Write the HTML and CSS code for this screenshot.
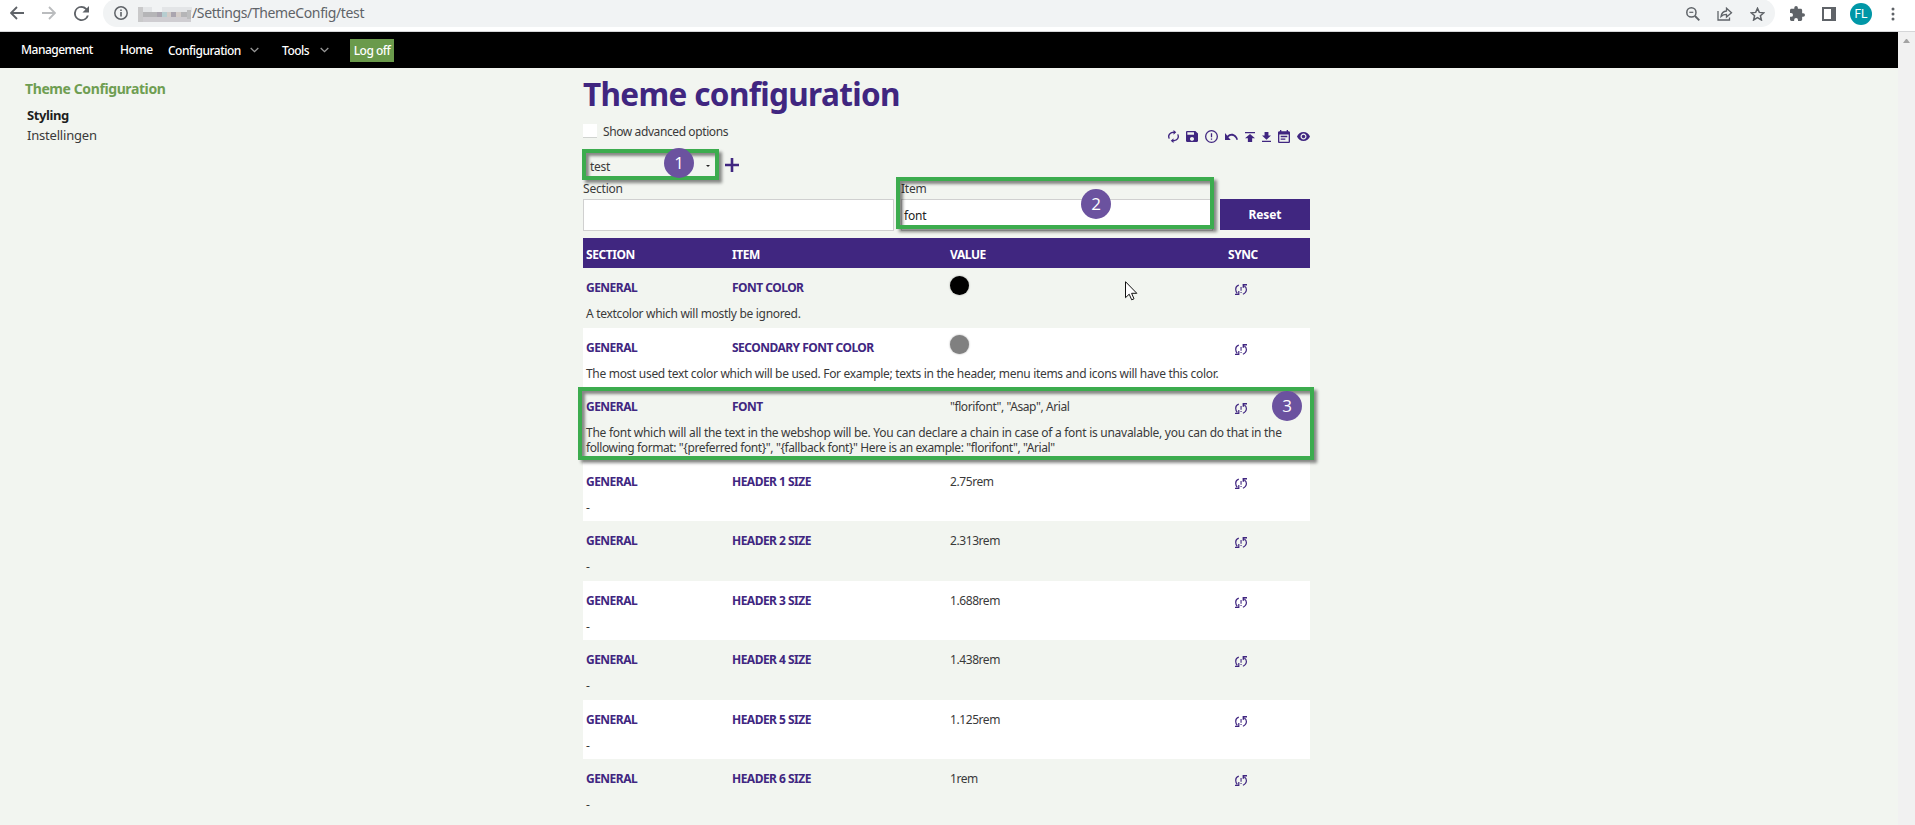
FILE: index.html
```html
<!DOCTYPE html>
<html lang="en">
<head>
<meta charset="utf-8">
<title>Theme configuration</title>
<link rel="stylesheet" href="styles.css">
</head>
<body>
<svg class="defs" width="0" height="0">
  <symbol id="sync" viewBox="0 0 12 11"><path d="M3.800 1.100C1.700 1.800.7 3.200.7 5.200c0 1.800.6 3 1.600 4.200M0 10.300h3.800V7" fill="none" stroke="#402680" stroke-width="1.200"/><path d="M5.500 3h1.100v3.700H5.500zM5.500 7.900h1.100v1.200H5.500z"/><path d="M7.600 0H12v1.500H9.200v2.300H7.600z"/><path d="M9.400 2c1.400.9 2 2 2 3.600 0 2.200-1.200 3.700-3.500 4.700" fill="none" stroke="#402680" stroke-width="1.200"/></symbol>
</svg>

<header class="browser">
  <svg class="b-icon back" width="14" height="14" viewBox="0 0 14 14"><path d="M14 7H1.500M7 1 1 7l6 6"/></svg>
  <svg class="b-icon forward" width="14" height="14" viewBox="0 0 14 14"><path d="M0 7h12.500M7 1l6 6-6 6"/></svg>
  <svg class="reload" width="15" height="15" viewBox="4 4 16 16"><path d="M17.650 6.350A7.960 7.960 0 0 0 12 4a8 8 0 1 0 7.730 10h-2.080A6 6 0 1 1 12 6c1.660 0 3.140.69 4.220 1.780L13 11h7V4l-2.350 2.350z"/></svg>
  <div class="address">
    <svg width="14" height="14" viewBox="0 0 14 14"><circle cx="7" cy="7" r="6.200" fill="none" stroke="#5f6368" stroke-width="1.500"/><path d="M6.200 6h1.600v4.500H6.200zM6.200 3.400h1.600V5H6.200z" fill="#5f6368"/></svg>
    <svg class="mosaic" width="54" height="15" viewBox="0 0 54 15"><path fill="#c9c9ca" d="M0 0h5v15H0z"/><path fill="#e3e5e7" d="M5 0h9v5H5zM24 0h30v5H24z"/><path fill="#b5b5b7" d="M5 5h9v5H5zM14 5h5v5h-5zM43 5h6v5h-6z"/><path fill="#cfcdd1" d="M5 10h14v5H5zM19 10h34v5H19z"/><path fill="#aaa5af" d="M19 5h5v5h-5zM33 5h5v5h-5z"/><path fill="#b6cdd0" d="M24 5h5v5h-5z"/><path fill="#d3ccc8" d="M29 5h4v5h-4zM38 5h5v5h-5z"/><path fill="#bdbebf" d="M49 3h4v9h-4z"/></svg>
    <span class="url">/Settings/ThemeConfig/test</span>
  </div>
  <div class="tools">
    <svg class="t-zoom" width="14" height="14" viewBox="0 0 14 14"><path d="M9 9 13.300 13.300" stroke-width="1.900"/><path d="M3.300 5.300h4" stroke-width="1.200"/><circle cx="5.400" cy="5.400" r="4.600" stroke-width="1.500"/></svg>
    <svg class="t-share" width="16" height="14" viewBox="0 0 16 14"><path d="M1 4v9h11.500v-2.500M4 9.500C4.500 6 6.500 4.300 9.500 4V1.200L14.500 5.800 9.500 10V7.400C7 7.400 5.500 8 4 9.500z" stroke-width="1.300"/></svg>
    <svg class="t-star" width="15" height="14" viewBox="0 0 15 14"><path d="M7.500 1.300 9.300 5.400l4.500.4-3.400 2.900 1 4.300-3.900-2.300L3.600 13l1-4.300L1.200 5.800l4.500-.4z" stroke-width="1.500"/></svg>
    <svg class="t-ext" width="15" height="15" viewBox="2 1 21 21"><path fill="#5f6368" stroke="none" d="M20.500 11H19V7c0-1.100-.9-2-2-2h-4V3.500a2.500 2.500 0 0 0-5 0V5H4c-1.100 0-2 .9-2 2v3.800h1.500a2.700 2.700 0 0 1 0 5.400H2V20c0 1.100.9 2 2 2h3.800v-1.500a2.700 2.700 0 0 1 5.400 0V22H17c1.100 0 2-.9 2-2v-4h1.500a2.500 2.500 0 0 0 0-5z"/></svg>
    <svg class="t-panel" width="14" height="14" viewBox="0 0 14 14"><path fill="#5f6368" stroke="none" fill-rule="evenodd" d="M0 0h14v14H0zM2 2v10h7V2z"/></svg>
    <span class="avatar">FL</span>
    <svg class="t-menu" width="4" height="14" viewBox="0 0 4 14"><g fill="#5f6368" stroke="none"><circle cx="2" cy="2" r="1.500"/><circle cx="2" cy="7" r="1.500"/><circle cx="2" cy="12" r="1.500"/></g></svg>
  </div>
</header>

<div class="viewport">
  <div class="page">
    <nav class="nav">
      <span class="brand">Management</span>
      <span class="home">Home</span>
      <span class="drop conf">Configuration<svg width="9" height="6" viewBox="0 0 9 6"><path d="M.7 1 4.500 4.700 8.300 1"/></svg></span>
      <span class="drop tool">Tools<svg width="9" height="6" viewBox="0 0 9 6"><path d="M.7 1 4.500 4.700 8.300 1"/></svg></span>
      <span class="logoff">Log off</span>
    </nav>
    <div class="body">
      <aside class="side">
        <h2 class="side-title">Theme Configuration</h2>
        <div class="side-link active">Styling</div>
        <div class="side-link">Instellingen</div>
      </aside>
      <main class="main">
        <h1 class="title">Theme configuration</h1>
        <div class="options">
          <label class="advanced"><span class="check"></span>Show advanced options</label>
          <div class="actions">
            <svg width="11" height="13" viewBox="4 1 16 22" preserveAspectRatio="none"><path d="M12 6v3l4-4-4-4v3c-4.420 0-8 3.580-8 8 0 1.570.46 3.030 1.240 4.260L6.700 14.800c-.45-.83-.7-1.790-.7-2.800 0-3.310 2.690-6 6-6zm6.760 1.740L17.300 9.200c.44.84.7 1.790.7 2.800 0 3.310-2.690 6-6 6v-3l-4 4 4 4v-3c4.420 0 8-3.580 8-8 0-1.570-.46-3.030-1.240-4.260z"/></svg>
            <svg width="12" height="11" viewBox="3 3 18 18" preserveAspectRatio="none"><path d="M17 3H5c-1.110 0-2 .9-2 2v14c0 1.100.89 2 2 2h14c1.100 0 2-.9 2-2V7l-4-4zm-5 16c-1.660 0-3-1.340-3-3s1.340-3 3-3 3 1.340 3 3-1.340 3-3 3zm3-10H5V5h10v4z"/></svg>
            <svg width="13" height="13" viewBox="2 2 20 20"><path d="M11 15h2v2h-2zm0-8h2v6h-2zM12 2a10 10 0 1 0 0 20 10 10 0 0 0 0-20zm0 18a8 8 0 1 1 0-16 8 8 0 0 1 0 16z"/></svg>
            <svg width="13" height="7" viewBox="2 7 20.500 9" preserveAspectRatio="none"><path d="M12.500 8c-2.650 0-5.050.99-6.900 2.600L2 7v9h9l-3.620-3.620c1.390-1.160 3.160-1.880 5.120-1.880 3.540 0 6.550 2.310 7.600 5.500l2.370-.78C21.080 11.030 17.150 8 12.500 8z"/></svg>
            <svg width="10" height="10" viewBox="5 4 14 16" preserveAspectRatio="none"><path d="M5 4v2h14V4H5zm0 10h4v6h6v-6h4l-7-7-7 7z"/></svg>
            <svg width="9" height="10" viewBox="5 3 14 17" preserveAspectRatio="none"><path d="M19 9h-4V3H9v6H5l7 7 7-7zM5 18v2h14v-2H5z"/></svg>
            <svg width="12" height="13" viewBox="3 1 18 20" preserveAspectRatio="none"><path d="M17 10H7v2h10v-2zm2-7h-1V1h-2v2H8V1H6v2H5c-1.110 0-1.990.9-1.990 2L3 19c0 1.100.89 2 2 2h14c1.100 0 2-.9 2-2V5c0-1.100-.9-2-2-2zm0 16H5V8h14v11zm-5-5H7v2h7v-2z"/></svg>
            <svg width="13" height="9" viewBox="1 4.500 22 15" preserveAspectRatio="none"><path d="M12 4.500C7 4.500 2.730 7.610 1 12c1.730 4.390 6 7.500 11 7.500s9.270-3.110 11-7.500c-1.730-4.390-6-7.500-11-7.500zM12 17c-2.760 0-5-2.240-5-5s2.240-5 5-5 5 2.240 5 5-2.240 5-5 5zm0-8c-1.660 0-3 1.340-3 3s1.340 3 3 3 3-1.340 3-3-1.340-3-3-3z"/></svg>
          </div>
        </div>
        <div class="theme-row">
          <div class="select"><span>test</span><i class="caret"></i></div>
          <svg class="plus" width="14" height="14" viewBox="0 0 14 14"><path d="M5.700 0h2.600v5.700H14v2.600H8.300V14H5.700V8.300H0V5.700h5.700z"/></svg>
        </div>
        <div class="filters">
          <label class="field f-section">Section<span class="input"></span></label>
          <label class="field f-item">Item<span class="input">font</span></label>
          <span class="reset">Reset</span>
        </div>
        <div class="table">
          <div class="cells thead"><span>SECTION</span><span>ITEM</span><span>VALUE</span><span>SYNC</span></div>
          <div class="row"><div class="cells"><b>GENERAL</b><b>FONT COLOR</b><span><i class="dot black"></i></span><svg class="sync"><use href="#sync"/></svg></div><p>A textcolor which will mostly be ignored.</p></div>
          <div class="row"><div class="cells"><b>GENERAL</b><b>SECONDARY FONT COLOR</b><span><i class="dot gray"></i></span><svg class="sync"><use href="#sync"/></svg></div><p>The most used text color which will be used. For example; texts in the header, menu items and icons will have this color.</p></div>
          <div class="row tall"><div class="cells"><b>GENERAL</b><b>FONT</b><span>"florifont", "Asap", Arial</span><svg class="sync"><use href="#sync"/></svg></div><p><span class="wide">The font which will all the text in the webshop will be. You can declare a chain in case of a font is unavalable, you can do that in the</span><br><span class="narrow">following format: "{preferred font}", "{fallback font}" Here is an example: "florifont", "Arial"</span></p></div>
          <div class="row"><div class="cells"><b>GENERAL</b><b>HEADER 1 SIZE</b><span>2.75rem</span><svg class="sync"><use href="#sync"/></svg></div><p>-</p></div>
          <div class="row"><div class="cells"><b>GENERAL</b><b>HEADER 2 SIZE</b><span>2.313rem</span><svg class="sync"><use href="#sync"/></svg></div><p>-</p></div>
          <div class="row"><div class="cells"><b>GENERAL</b><b>HEADER 3 SIZE</b><span>1.688rem</span><svg class="sync"><use href="#sync"/></svg></div><p>-</p></div>
          <div class="row"><div class="cells"><b>GENERAL</b><b>HEADER 4 SIZE</b><span>1.438rem</span><svg class="sync"><use href="#sync"/></svg></div><p>-</p></div>
          <div class="row"><div class="cells"><b>GENERAL</b><b>HEADER 5 SIZE</b><span>1.125rem</span><svg class="sync"><use href="#sync"/></svg></div><p>-</p></div>
          <div class="row"><div class="cells"><b>GENERAL</b><b>HEADER 6 SIZE</b><span>1rem</span><svg class="sync"><use href="#sync"/></svg></div><p>-</p></div>
        </div>
      </main>
    </div>
  </div>
  <div class="scrollbar"><i></i></div>
</div>

<div class="mark mark-1"></div><div class="mark mark-2"></div><div class="mark mark-3"></div>
<span class="badge badge-1">1</span><span class="badge badge-2">2</span><span class="badge badge-3">3</span>
<svg class="cursor" width="13" height="20" viewBox="0 0 13 20"><path d="M.5.7v16l3.700-3.500 2.500 5.600 2.300-1L6.600 12.300h5.200z" fill="#fff" stroke="#111" stroke-width="1"/></svg>
</body>
</html>
```
FILE: styles.css
```css
* { box-sizing: border-box; }
body {
  margin: 0;
  height: 825px;
  overflow: hidden;
  position: relative;
  font: 12px/15px "Noto Sans", "Open Sans", sans-serif;
  letter-spacing: -.31px;
  color: #3a3a3a;
  background: #f2f5f0;
}
.defs { position: absolute; }
svg { display: block; flex: none; }

/* browser toolbar */
.browser {
  height: 32px;
  background: #fff;
  border-bottom: 1px solid #d5d6d8;
  display: flex;
  align-items: flex-start;
  padding-left: 10px;
}
.b-icon { fill: none; stroke: #5f6368; stroke-width: 1.8; margin-top: 6px; }
.forward { stroke: #babcbe; margin-left: 18px; }
.reload { fill: #5f6368; margin: 6px 0 0 18px; }
.address {
  width: 1672px;
  height: 28px;
  margin: -1px 0 0 14px;
  padding: 0 0 0 11px;
  border-radius: 14px;
  background: #f1f3f4;
  display: flex;
  align-items: center;
}
.mosaic { margin: 2px 0 0 10px; }
.url { font-size: 14px; line-height: 20px; color: #5f6368; white-space: nowrap; letter-spacing: -.38px; }
.tools {
  display: flex;
  align-items: center;
  height: 27px;
  margin-left: -89px;
  fill: none;
  stroke: #5f6368;
}
.t-share { margin-left: 17px; }
.t-star { margin-left: 17px; }
.t-ext { margin-left: 25px; }
.t-panel { margin-left: 17px; }
.avatar {
  width: 22px;
  height: 22px;
  margin-left: 14px;
  border-radius: 50%;
  background: #0097a7;
  color: #fff;
  font: 12px/22px Roboto, sans-serif;
  letter-spacing: 0;
  text-align: center;
}
.t-menu { margin-left: 19px; }

/* page frame */
.viewport { display: flex; height: 793px; }
.page { width: 1898px; }
.scrollbar { width: 17px; background: #f1f1f1; padding: 7px 5px; }
.scrollbar i { display: block; border: 3.5px solid transparent; border-top: 0; border-bottom: 4px solid #a3a3a3; }

.nav {
  height: 36px;
  background: #000;
  color: #fff;
  display: flex;
  padding-left: 21px;
  font-weight: 500;
  line-height: 36px;
  letter-spacing: -.5px;
  white-space: nowrap;
}
.brand { width: 99px; }
.home { width: 48px; }
.drop { display: flex; padding-top: 1px; }
.drop svg { fill: none; stroke: #9a9a9a; stroke-width: 1.3; margin: 14px 0 0 auto; }
.conf { width: 91px; margin-right: 23px; }
.tool { width: 47px; margin-right: 21px; }
.logoff { width: 44px; height: 23px; margin-top: 7px; background: #6a9a4b; line-height: 24px; text-align: center; }

.body { display: flex; }
.side { width: 583px; padding: 11px 0 0 25px; }
.side-title { margin: 0; font-size: 14px; line-height: 20px; color: #6f9e52; letter-spacing: -.4px; }
.side-link { padding-left: 2px; font-size: 13px; line-height: 20px; letter-spacing: -.2px; }
.side-link.active { font-weight: 700; color: #1e1e1e; margin-top: 6px; letter-spacing: -.4px; }

.main { width: 727px; padding-top: 7px; }
.title { margin: 0; font-size: 31.5px; line-height: 38px; height: 40px; letter-spacing: -.65px; color: #402680; white-space: nowrap; }
.options { display: flex; justify-content: space-between; height: 32px; padding-top: 8px; }
.advanced { display: flex; height: 15px; line-height: 17px; letter-spacing: -.4px; }
.check { width: 14px; height: 14px; margin: 1px 6px 0 0; background: #fff; border-bottom: 1px solid #d0d3d0; }
.actions { display: flex; align-items: center; gap: 7px; height: 13px; margin-top: 7px; fill: #402680; }
.theme-row { display: flex; align-items: center; height: 34px; }
.select { width: 133px; display: flex; align-items: center; justify-content: space-between; padding: 4px 6px 0 7px; }
.caret { border: 2px solid transparent; border-bottom: 0; border-top-color: #222; }
.plus { margin: 1px 0 0 9px; fill: #402680; }
.filters { display: flex; align-items: flex-end; height: 50px; }
.field { display: flex; flex-direction: column; letter-spacing: -.2px; }
.field .input {
  height: 32px;
  margin-top: 3px;
  border: 1px solid #d0d0d0;
  background: #fff;
  color: #222;
  font-size: 12px;
  line-height: 31px;
  padding-left: 2px;
}
.f-section { width: 311px; margin-right: 7px; }
.f-item { width: 312px; }
.reset {
  width: 90px;
  height: 31px;
  margin: 0 0 1px 7px;
  background: #402680;
  color: #fff;
  font-weight: 700;
  line-height: 32px;
  letter-spacing: -.1px;
  text-align: center;
}

.table { margin-top: 7px; }
.cells { display: grid; grid-template-columns: 146px 218px 278px 79px; padding-left: 3px; letter-spacing: -.42px; }
.thead { height: 30px; line-height: 33px; background: #402680; color: #fff; font-weight: 700; }
.row { height: 59px; }
.row:nth-child(2), .row:nth-child(6), .row:nth-child(8) { height: 60px; }
.row.tall { height: 75px; }
.row:nth-child(odd) { background: #fff; }
.row .cells { height: 38px; line-height: 40px; }
.row b { color: #402680; letter-spacing: -.52px; }
.row p { margin: 0; padding-left: 3px; white-space: nowrap; }
.row .wide { letter-spacing: -.27px; }
.row .narrow { letter-spacing: -.4px; }
.sync { width: 12px; height: 11px; margin: 16px 0 0 7px; fill: #402680; }
.dot { display: block; width: 19px; height: 19px; margin-top: 7px; border-radius: 50%; box-shadow: 0 0 2px rgba(0, 0, 0, .4); }
.black { background: #000; margin-top: 8px; }
.gray { background: #808080; }

/* annotations over the page */
.mark {
  position: absolute;
  border: 4px solid #3cac4e;
  box-shadow: 3px 3px 3px rgba(0, 0, 0, .45), inset 3px 3px 3px rgba(0, 0, 0, .45);
}
.mark-1 { left: 582px; top: 149px; width: 137px; height: 31px; }
.mark-2 { left: 896px; top: 177px; width: 318px; height: 52px; }
.mark-3 { left: 578px; top: 387px; width: 736px; height: 73px; }
.badge {
  position: absolute;
  width: 30px;
  height: 30px;
  border-radius: 50%;
  background: #6b529f;
  color: #fff;
  font: 17px/30px "Open Sans", sans-serif;
  letter-spacing: 0;
  text-align: center;
}
.badge-1 { left: 664px; top: 148px; }
.badge-2 { left: 1081px; top: 189px; }
.badge-3 { left: 1272px; top: 391px; }
.cursor { position: absolute; left: 1125px; top: 281px; }
```
